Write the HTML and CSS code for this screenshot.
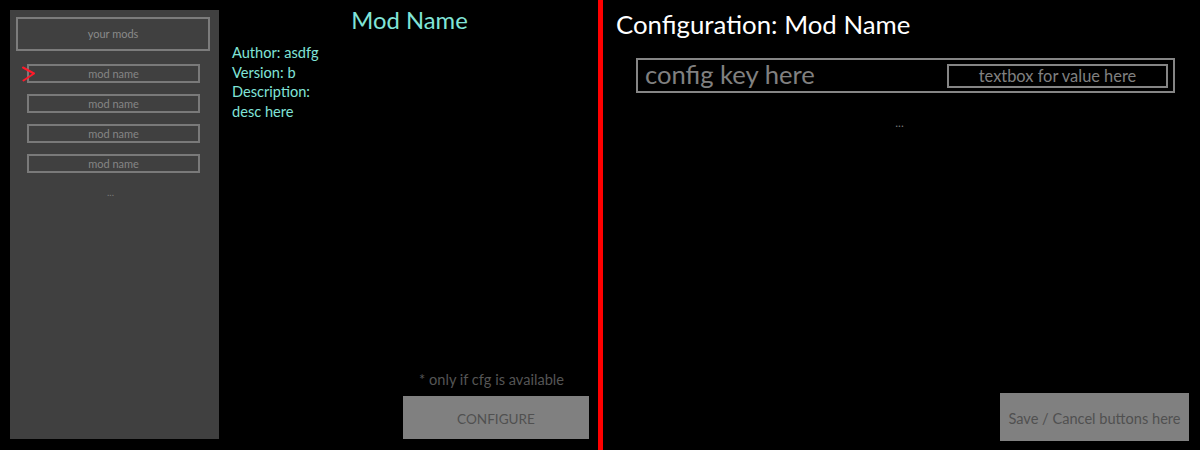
FILE: index.html
```html
<!DOCTYPE html>
<html>
<head>
<meta charset="utf-8">
<link rel="stylesheet" href="styles.css">
</head>
<body>
<div class="screen">
  <section class="left">
    <aside class="sidebar">
      <div class="mods-header">your mods</div>
      <ul class="mod-list">
        <li class="mod-item selected"><svg class="cursor" width="14" height="16" viewBox="0 0 14 16"><path d="M1 1.5 L12 7.5 L1.5 14.5" fill="none" stroke="#ff1a2a" stroke-width="2" stroke-linecap="round" stroke-linejoin="round"/></svg>mod name</li>
        <li class="mod-item">mod name</li>
        <li class="mod-item">mod name</li>
        <li class="mod-item">mod name</li>
      </ul>
      <div class="more">...</div>
    </aside>
    <main class="details">
      <h1 class="mod-title">Mod Name</h1>
      <div class="meta">
        <div>Author: asdfg</div>
        <div>Version: b</div>
        <div>Description:</div>
        <div>desc here</div>
      </div>
      <div class="spacer"></div>
      <div class="note">* only if cfg is available</div>
      <button class="configure">CONFIGURE</button>
    </main>
  </section>
  <div class="divider"></div>
  <section class="right">
    <h2 class="config-title">Configuration: Mod Name</h2>
    <div class="config-row">
      <span class="config-key">config key here</span>
      <span class="config-value">textbox for value here</span>
    </div>
    <div class="config-more">...</div>
    <div class="spacer"></div>
    <div class="actions">
      <button class="save">Save / Cancel buttons here</button>
    </div>
  </section>
</div>
</body>
</html>
```
FILE: styles.css
```css
* { box-sizing: border-box; }
html, body {
  margin: 0;
  padding: 0;
  background: #000;
  width: 1200px;
  height: 450px;
  overflow: hidden;
  font-family: Lato, "Open Sans", sans-serif;
}
.screen {
  display: flex;
  width: 1200px;
  height: 450px;
}
.left {
  width: 598px;
  display: flex;
  padding: 10px 0 11px 10px;
}
.sidebar {
  width: 209px;
  height: 429px;
  background: #404040;
  padding: 7px 0 0 6px;
  display: flex;
  flex-direction: column;
}
.mods-header {
  width: 194px;
  height: 34px;
  border: 2px solid #7c7c7c;
  color: #8a8a8a;
  font-size: 11px;
  display: flex;
  align-items: center;
  justify-content: center;
  padding-bottom: 2px;
}
.mod-list {
  list-style: none;
  margin: 13px 0 0 11px;
  padding: 0;
  display: flex;
  flex-direction: column;
  gap: 11px;
}
.mod-item {
  position: relative;
  width: 173px;
  height: 19px;
  border: 2px solid #7a7a7a;
  color: #858585;
  font-size: 11px;
  display: flex;
  align-items: center;
  justify-content: center;
}
.cursor {
  position: absolute;
  left: -7px;
  top: -0.5px;
}
.more {
  margin-top: 13px;
  text-align: center;
  color: #7a7a7a;
  font-size: 10px;
  padding-right: 14px;
}
.details {
  flex: 1;
  display: flex;
  flex-direction: column;
  padding: 0 9px 0 13px;
  margin-top: -10px;
  margin-bottom: -11px;
  padding-bottom: 11px;
}
.mod-title {
  margin: 7px 0 0;
  text-align: center;
  color: #80e4d8;
  font-weight: 400;
  font-size: 23.8px;
  line-height: 27px;
  padding-right: 2px;
}
.meta {
  margin-top: 9px;
  color: #80e4d8;
  font-size: 14.6px;
  line-height: 19.7px;
}
.spacer { flex: 1; }
.note {
  text-align: right;
  padding-right: 25px;
  color: #555;
  font-size: 14.6px;
  line-height: 18px;
  margin-bottom: 7px;
}
.configure {
  align-self: flex-end;
  width: 186px;
  height: 43px;
  border: none;
  background: #808080;
  color: #505050;
  font-family: inherit;
  font-size: 13.6px;
  padding: 3px 0 0;
}
.divider {
  width: 5px;
  height: 450px;
  background: #ff0000;
}
.right {
  flex: 1;
  display: flex;
  flex-direction: column;
  padding: 0 11px 9px 13px;
}
.config-title {
  margin: 9px 0 0;
  color: #fff;
  font-weight: 400;
  font-size: 25.8px;
  line-height: 31px;
}
.config-row {
  margin: 18px 0 0 20px;
  width: 539px;
  height: 35px;
  border: 2px solid #858585;
  display: flex;
  align-items: center;
  justify-content: space-between;
  padding: 0 5px 0 7px;
}
.config-key {
  color: #808080;
  font-size: 25.6px;
  line-height: 28px;
  margin-top: -3px;
}
.config-value {
  width: 221px;
  height: 24px;
  border: 2px solid #858585;
  color: #808080;
  font-size: 16.4px;
  display: flex;
  align-items: center;
  justify-content: center;
}
.config-more {
  margin-top: 22px;
  text-align: center;
  color: #777;
  font-size: 12px;
  padding-right: 6px;
}
.actions {
  display: flex;
  justify-content: flex-end;
}
.save {
  width: 189px;
  height: 48px;
  border: none;
  background: #808080;
  color: #505050;
  font-family: inherit;
  font-size: 14.6px;
  padding: 3px 0 0;
}
```
